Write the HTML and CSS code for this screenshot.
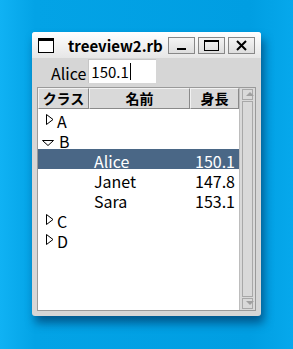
FILE: index.html
```html
<!DOCTYPE html>
<html lang="ja">
<head>
<meta charset="UTF-8">
<meta name="viewport" content="width=device-width, initial-scale=1.0">
<title>treeview2.rb</title>
<link rel="stylesheet" href="styles.css">
</head>
<body>

<div class="window">
    <div class="titlebar">
        <span class="app-icon"></span>
        <span class="title">treeview2.rb</span>
        <div class="controls">
            <span class="ctl"><span class="min"></span></span>
            <span class="ctl"><span class="max"></span></span>
            <span class="ctl">
                <svg width="11" height="11" viewBox="0 0 11 11"><path d="M1 1 L10 10 M10 1 L1 10" stroke="#000" stroke-width="2"/></svg>
            </span>
        </div>
    </div>

    <div class="content">
        <div class="entry-row">
            <span class="label">Alice</span>
            <div class="entry">150.1<span class="caret"></span></div>
        </div>

        <div class="tree-frame">
            <div class="tree">
                <div class="heading">
                    <div class="th c1">クラス</div>
                    <div class="th c2">名前</div>
                    <div class="th c3">身長</div>
                </div>
                <div class="row">
                    <div class="cell c1"><svg class="ind" width="8" height="11" viewBox="0 0 8 11"><path d="M0.5 0.5 L7 5.5 L0.5 10.5 Z" fill="#fff" stroke="#000"/></svg><span>A</span></div>
                    <div class="cell c2"></div>
                    <div class="cell c3"></div>
                </div>
                <div class="row">
                    <div class="cell c1"><svg class="ind open" width="12" height="6" viewBox="0 0 12 6"><path d="M0.5 0.5 L11.5 0.5 L6 5.5 Z" fill="#fff" stroke="#000"/></svg><span>B</span></div>
                    <div class="cell c2"></div>
                    <div class="cell c3"></div>
                </div>
                <div class="row selected">
                    <div class="cell c1"></div>
                    <div class="cell c2">Alice</div>
                    <div class="cell c3">150.1</div>
                </div>
                <div class="row">
                    <div class="cell c1"></div>
                    <div class="cell c2">Janet</div>
                    <div class="cell c3">147.8</div>
                </div>
                <div class="row">
                    <div class="cell c1"></div>
                    <div class="cell c2">Sara</div>
                    <div class="cell c3">153.1</div>
                </div>
                <div class="row">
                    <div class="cell c1"><svg class="ind" width="8" height="11" viewBox="0 0 8 11"><path d="M0.5 0.5 L7 5.5 L0.5 10.5 Z" fill="#fff" stroke="#000"/></svg><span>C</span></div>
                    <div class="cell c2"></div>
                    <div class="cell c3"></div>
                </div>
                <div class="row">
                    <div class="cell c1"><svg class="ind" width="8" height="11" viewBox="0 0 8 11"><path d="M0.5 0.5 L7 5.5 L0.5 10.5 Z" fill="#fff" stroke="#000"/></svg><span>D</span></div>
                    <div class="cell c2"></div>
                    <div class="cell c3"></div>
                </div>
            </div>
            <div class="scrollbar">
                <div class="arrow up"></div>
                <div class="trough"><div class="thumb"></div></div>
                <div class="arrow down"></div>
            </div>
        </div>
    </div>
</div>

</body>
</html>
```

FILE: styles.css
```css
body {
    margin: 0;
    width: 293px;
    height: 349px;
    padding: 32px;
    box-sizing: border-box;
    background: linear-gradient(90deg, #10b2f4 0%, #03a3e6 12%, #009ee2 85%, #06a8ec 100%);
    font-family: "Noto Sans CJK JP", "Noto Sans", sans-serif;
    color: #000;
}
.window {
    width: 229px;
    height: 284px;
    background-color: #d6d6d6;
    border-radius: 3px;
    box-shadow: 3px 7px 10px rgba(0, 30, 70, 0.55);
    display: flex;
    flex-direction: column;
    overflow: hidden;
}
.titlebar {
    height: 26px;
    background: linear-gradient(#ffffff, #e6e6e6);
    display: flex;
    align-items: center;
    padding: 0 6px;
}
.app-icon {
    width: 14px;
    height: 11px;
    border: 1px solid #000;
    border-top-width: 3px;
    background-color: #fff;
    margin-top: 1px;
}
.title {
    font-weight: bold;
    font-size: 15px;
    margin-left: 14px;
    flex: 1;
    white-space: nowrap;
}
.controls {
    display: flex;
    gap: 3px;
}
.ctl {
    width: 25px;
    height: 15px;
    border: 1px solid #888;
    background: linear-gradient(#f4f4f4, #dedede);
    display: flex;
    align-items: center;
    justify-content: center;
}
.ctl .min {
    width: 9px;
    height: 2px;
    background-color: #000;
    margin-top: 8px;
}
.ctl .max {
    width: 13px;
    height: 8px;
    border: 1px solid #000;
    border-top-width: 2px;
}
.content {
    flex: 1;
    display: flex;
    flex-direction: column;
    padding: 0 5px 5px 5px;
}
.entry-row {
    height: 29px;
    display: flex;
    align-items: center;
    font-size: 16px;
}
.label {
    margin-left: 14px;
    margin-right: 2px;
}
.entry {
    width: 68px;
    height: 24px;
    margin-top: -3px;
    background-color: #fff;
    border-top: 1px solid #c6c6c6;
    border-left: 1px solid #c6c6c6;
    font-size: 15px;
    display: flex;
    align-items: center;
    padding-left: 2px;
    box-sizing: border-box;
}
.caret {
    width: 1px;
    height: 17px;
    background-color: #000;
    margin-left: 1px;
}
.tree-frame {
    flex: 1;
    display: flex;
    border: 1px solid #9a9a9a;
    background-color: #fff;
}
.tree {
    flex: 1;
    display: flex;
    flex-direction: column;
}
.heading {
    display: flex;
    height: 21px;
    background-color: #d9d9d9;
}
.th {
    font-weight: bold;
    font-size: 14px;
    text-align: center;
    line-height: 19px;
    box-sizing: border-box;
    border: 1px solid;
    border-color: #f2f2f2 #8a8a8a #8a8a8a #f2f2f2;
}
.c1 { width: 51px; }
.c2 { width: 101px; }
.c3 { width: 49px; }
.row {
    display: flex;
    height: 20px;
    font-size: 16px;
}
.cell {
    height: 20px;
    line-height: 18px;
    padding-top: 3px;
    box-sizing: border-box;
}
.row .c2 {
    padding-left: 5px;
}
.row .c3 {
    text-align: right;
    padding-right: 4px;
}
.row.selected {
    background-color: #4a6786;
    color: #fff;
}
.cell.c1 {
    display: flex;
    align-items: flex-start;
    padding-left: 8px;
}
.ind {
    margin-right: 3px;
    margin-top: 2px;
    flex-shrink: 0;
}
.ind.open {
    margin-left: -4px;
    margin-right: 5px;
    margin-top: 8px;
}
.scrollbar {
    width: 17px;
    background-color: #d9d9d9;
    border-left: 1px solid #bdbdbd;
    display: flex;
    flex-direction: column;
    padding: 1px 2px 1px 2px;
    box-sizing: border-box;
}
.arrow {
    height: 9px;
    border: 1px solid #a8a8a8;
    position: relative;
}
.arrow::after {
    content: "";
    position: absolute;
    left: 3px;
    border-left: 4px solid transparent;
    border-right: 4px solid transparent;
}
.arrow.up::after {
    top: 2px;
    border-bottom: 4px solid #a0a0a0;
}
.arrow.down::after {
    top: 2px;
    border-top: 4px solid #a0a0a0;
}
.trough {
    flex: 1;
    display: flex;
    padding: 1px 0;
}
.thumb {
    flex: 1;
    border: 1px solid #a8a8a8;
}
```
